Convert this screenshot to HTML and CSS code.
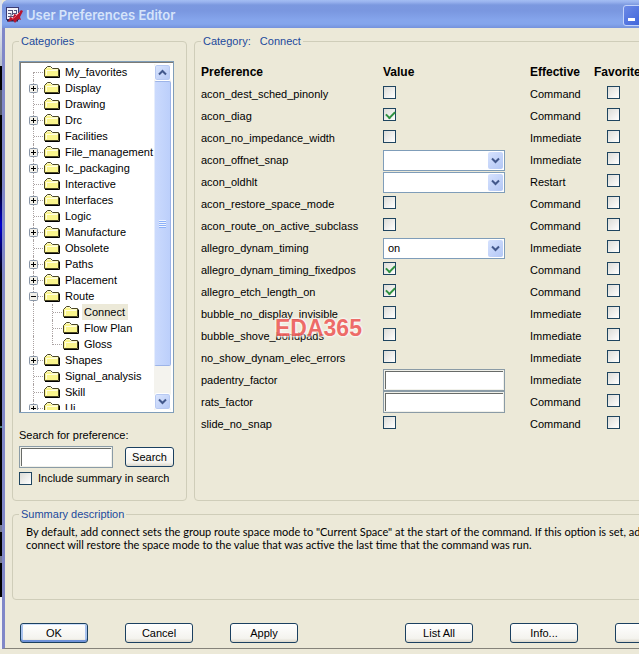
FILE: index.html
```html
<!DOCTYPE html>
<html lang="en">
<head>
<meta charset="utf-8">
<title>User Preferences Editor</title>
<link rel="stylesheet" href="styles.css">
</head>
<body>
<svg class="defs" aria-hidden="true">
  <symbol id="folder" viewBox="0 0 16 12">
    <path d="M1 11V3.500L3 1.500H6.500L8 3.500H14.500V11Z" fill="#faf58c"/>
    <path d="M2 4.500H13.500M2.500 5V9" stroke="#fffde0"/>
    <path d="M.5 10.500V3.500L3.500 .5H6.500L8.500 2.500H14.500V10.500Z" fill="none" stroke="#4a4623"/>
    <path d="M1 11.500H15.500V3.500" fill="none" stroke="#000"/>
  </symbol>
  <symbol id="plus" viewBox="0 0 9 9">
    <rect x=".5" y=".5" width="8" height="8" rx="1" fill="#f2f0e9" stroke="#8794a6"/>
    <path d="M2 4.500H7M4.500 2V7" stroke="#000"/>
  </symbol>
  <symbol id="minus" viewBox="0 0 9 9">
    <rect x=".5" y=".5" width="8" height="8" rx="1" fill="#f2f0e9" stroke="#8794a6"/>
    <path d="M2 4.500H7" stroke="#000"/>
  </symbol>
  <symbol id="down" viewBox="0 0 9 7">
    <path d="M1 1.500L4.500 5L8 1.500" fill="none" stroke="#43598c" stroke-width="2"/>
  </symbol>
  <symbol id="up" viewBox="0 0 9 7">
    <path d="M1 5.500L4.500 2L8 5.500" fill="none" stroke="#43598c" stroke-width="2"/>
  </symbol>
</svg>
<div class="desktop">
  <div class="backdrop"></div>
  <main class="window">
    <header class="titlebar">
      <svg class="app-icon" viewBox="0 0 17 17" aria-hidden="true">
        <rect x=".5" y=".5" width="12" height="12" fill="#f2f3fb" stroke="#3b3b73"/>
        <path d="M2 3.500H6M8 3.500H11M2 6.500H5V9M7 6.500H11M2 9.500H8M6.500 3V8M10.500 3V6" stroke="#55557c" fill="none"/>
        <path d="M1 13.500H12" stroke="#22224a" stroke-width="2"/>
        <path d="M2 15L4 10L7 11L8 7L11 8L15 3L17 4L14 10L15 13L12 12L9 16L7 13Z" fill="#b7152d"/>
        <path d="M6 12L9 10L14 5" stroke="#ef5766" fill="none"/>
      </svg>
      <h1>User Preferences Editor</h1>
      <button class="minimize" aria-label="Minimize"></button>
    </header>

    <div class="panes">
      <fieldset class="categories">
        <legend>Categories</legend>
        <div class="tree">
          <ul class="nodes">
            <li><svg class="folder"><use href="#folder"/></svg><span>My_favorites</span></li>
            <li><svg class="toggle"><use href="#plus"/></svg><svg class="folder"><use href="#folder"/></svg><span>Display</span></li>
            <li><svg class="folder"><use href="#folder"/></svg><span>Drawing</span></li>
            <li><svg class="toggle"><use href="#plus"/></svg><svg class="folder"><use href="#folder"/></svg><span>Drc</span></li>
            <li><svg class="folder"><use href="#folder"/></svg><span>Facilities</span></li>
            <li><svg class="toggle"><use href="#plus"/></svg><svg class="folder"><use href="#folder"/></svg><span>File_management</span></li>
            <li><svg class="toggle"><use href="#plus"/></svg><svg class="folder"><use href="#folder"/></svg><span>Ic_packaging</span></li>
            <li><svg class="folder"><use href="#folder"/></svg><span>Interactive</span></li>
            <li><svg class="toggle"><use href="#plus"/></svg><svg class="folder"><use href="#folder"/></svg><span>Interfaces</span></li>
            <li><svg class="folder"><use href="#folder"/></svg><span>Logic</span></li>
            <li><svg class="toggle"><use href="#plus"/></svg><svg class="folder"><use href="#folder"/></svg><span>Manufacture</span></li>
            <li><svg class="folder"><use href="#folder"/></svg><span>Obsolete</span></li>
            <li><svg class="toggle"><use href="#plus"/></svg><svg class="folder"><use href="#folder"/></svg><span>Paths</span></li>
            <li><svg class="toggle"><use href="#plus"/></svg><svg class="folder"><use href="#folder"/></svg><span>Placement</span></li>
            <li><svg class="toggle"><use href="#minus"/></svg><svg class="folder"><use href="#folder"/></svg><span>Route</span></li>
            <li class="child"><svg class="folder"><use href="#folder"/></svg><span class="selected">Connect</span></li>
            <li class="child"><svg class="folder"><use href="#folder"/></svg><span>Flow Plan</span></li>
            <li class="child last"><svg class="folder"><use href="#folder"/></svg><span>Gloss</span></li>
            <li><svg class="toggle"><use href="#plus"/></svg><svg class="folder"><use href="#folder"/></svg><span>Shapes</span></li>
            <li><svg class="folder"><use href="#folder"/></svg><span>Signal_analysis</span></li>
            <li><svg class="folder"><use href="#folder"/></svg><span>Skill</span></li>
            <li><svg class="toggle"><use href="#plus"/></svg><svg class="folder"><use href="#folder"/></svg><span>Ui</span></li>
          </ul>
          <div class="scrollbar">
            <button class="scroll-button" aria-label="Scroll up"><svg class="arrow"><use href="#up"/></svg></button>
            <div class="thumb"><i class="grip"></i></div>
            <button class="scroll-button" aria-label="Scroll down"><svg class="arrow"><use href="#down"/></svg></button>
          </div>
        </div>
        <label class="search-label" for="search">Search for preference:</label>
        <div class="search-row">
          <input class="text-box" id="search" type="text">
          <button class="button">Search</button>
        </div>
        <label class="include"><input type="checkbox">Include summary in search</label>
      </fieldset>

      <fieldset class="preferences">
        <legend>Category: &nbsp; Connect</legend>
        <table>
          <thead>
            <tr><th class="name">Preference</th><th class="value">Value</th><th class="effective">Effective</th><th>Favorites</th></tr>
          </thead>
          <tbody>
            <tr><td><label for="p1">acon_dest_sched_pinonly</label></td><td><input id="p1" type="checkbox"></td><td>Command</td><td class="fav"><input type="checkbox" aria-label="Favorite"></td></tr>
            <tr><td><label for="p2">acon_diag</label></td><td><input id="p2" type="checkbox" checked></td><td>Command</td><td class="fav"><input type="checkbox" aria-label="Favorite"></td></tr>
            <tr><td><label for="p3">acon_no_impedance_width</label></td><td><input id="p3" type="checkbox"></td><td>Immediate</td><td class="fav"><input type="checkbox" aria-label="Favorite"></td></tr>
            <tr><td><label for="p4">acon_offnet_snap</label></td><td><div class="combo"><select id="p4"><option></option></select><span class="drop"><svg class="arrow"><use href="#down"/></svg></span></div></td><td>Immediate</td><td class="fav"><input type="checkbox" aria-label="Favorite"></td></tr>
            <tr><td><label for="p5">acon_oldhlt</label></td><td><div class="combo"><select id="p5"><option></option></select><span class="drop"><svg class="arrow"><use href="#down"/></svg></span></div></td><td>Restart</td><td class="fav"><input type="checkbox" aria-label="Favorite"></td></tr>
            <tr><td><label for="p6">acon_restore_space_mode</label></td><td><input id="p6" type="checkbox"></td><td>Command</td><td class="fav"><input type="checkbox" aria-label="Favorite"></td></tr>
            <tr><td><label for="p7">acon_route_on_active_subclass</label></td><td><input id="p7" type="checkbox"></td><td>Command</td><td class="fav"><input type="checkbox" aria-label="Favorite"></td></tr>
            <tr><td><label for="p8">allegro_dynam_timing</label></td><td><div class="combo"><select id="p8"><option>on</option></select><span class="drop"><svg class="arrow"><use href="#down"/></svg></span></div></td><td>Immediate</td><td class="fav"><input type="checkbox" aria-label="Favorite"></td></tr>
            <tr><td><label for="p9">allegro_dynam_timing_fixedpos</label></td><td><input id="p9" type="checkbox" checked></td><td>Command</td><td class="fav"><input type="checkbox" aria-label="Favorite"></td></tr>
            <tr><td><label for="p10">allegro_etch_length_on</label></td><td><input id="p10" type="checkbox" checked></td><td>Command</td><td class="fav"><input type="checkbox" aria-label="Favorite"></td></tr>
            <tr><td><label for="p11">bubble_no_display_invisible</label></td><td><input id="p11" type="checkbox"></td><td>Immediate</td><td class="fav"><input type="checkbox" aria-label="Favorite"></td></tr>
            <tr><td><label for="p12">bubble_shove_bondpads</label></td><td><input id="p12" type="checkbox"></td><td>Immediate</td><td class="fav"><input type="checkbox" aria-label="Favorite"></td></tr>
            <tr><td><label for="p13">no_show_dynam_elec_errors</label></td><td><input id="p13" type="checkbox"></td><td>Immediate</td><td class="fav"><input type="checkbox" aria-label="Favorite"></td></tr>
            <tr><td><label for="p14">padentry_factor</label></td><td><input class="text-box" id="p14" type="text"></td><td>Immediate</td><td class="fav"><input type="checkbox" aria-label="Favorite"></td></tr>
            <tr><td><label for="p15">rats_factor</label></td><td><input class="text-box" id="p15" type="text"></td><td>Command</td><td class="fav"><input type="checkbox" aria-label="Favorite"></td></tr>
            <tr><td><label for="p16">slide_no_snap</label></td><td><input id="p16" type="checkbox"></td><td>Command</td><td class="fav"><input type="checkbox" aria-label="Favorite"></td></tr>
          </tbody>
        </table>
        <div class="watermark">EDA365</div>
      </fieldset>
    </div>

    <fieldset class="summary">
      <legend>Summary description</legend>
      <p>By default, add connect sets the group route space mode to "Current Space" at the start of the command. If this option is set, add<br>connect will restore the space mode to the value that was active the last time that the command was run.</p>
    </fieldset>

    <footer class="actions">
      <button class="button default">OK</button>
      <button class="button">Cancel</button>
      <button class="button">Apply</button>
      <button class="button second-group">List All</button>
      <button class="button">Info...</button>
      <button class="button" aria-label="Help"></button>
    </footer>
  </main>
</div>
</body>
</html>
```

FILE: styles.css
```css
* { box-sizing: border-box; }

html, body { height: 100%; }

body {
  margin: 0;
  overflow: hidden;
  background: #ece9d8;
  color: #000;
  font: 11px/16px "Liberation Sans", Arial, sans-serif;
}

button, input, select { margin: 0; font: inherit; color: inherit; }

svg { display: block; flex: none; }

.defs { position: absolute; width: 0; height: 0; }

.desktop { display: flex; align-items: flex-start; }

.backdrop {
  flex: none;
  align-self: stretch;
  width: 2px;
  background: linear-gradient(#dfe3ee 0 30px, #b4bccb 66px, #000 66px 90px, #555a6b 90px 115px, #000 115px 185px, #0000d0 225px, #000 275px 426px, #497a78 426px 428px, #000 428px 525px, #777b92 525px 532px, #000 532px 556px, #777b92 556px 563px, #000 563px 597px, #f2f2f2 597px);
}

.window {
  flex: 1;
  min-width: 698px;
  border-left: 3px solid #8087c8;
  border-top-left-radius: 7px;
  border-bottom: 1px solid #85837a;
  background: #ece9d8;
}

/* Title bar */
.titlebar {
  display: flex;
  align-items: center;
  gap: 3px;
  height: 28px;
  padding: 2px 56px 0 2px;
  margin-left: -3px;
  border-top-left-radius: 6px;
  background: linear-gradient(#a3bdf3 0, #98b2ee 2px, #7b98df 5px, #7a97e0 11px, #85a5ec 20px, #84a5ec 24px, #7592dc 28px);
}

.app-icon { width: 17px; height: 17px; margin-left: 2px; }

.titlebar h1 {
  flex: 1;
  margin: 0;
  color: #d6e4fa;
  font: 600 13px/18px Inter, sans-serif;
}

.minimize {
  display: flex;
  align-items: flex-end;
  width: 21px;
  height: 21px;
  padding: 4px;
  border: 1px solid #c3d3fa;
  border-radius: 3px;
  background: linear-gradient(135deg, #6c8ae6, #3c62da);
}

.minimize::before { content: ""; width: 7px; height: 3px; background: #fff; }

/* Group boxes */
fieldset {
  position: relative;
  min-width: 0;
  margin: 0;
  padding: 0;
  border: 1px solid #cfcdb9;
  border-radius: 4px;
}

legend {
  padding: 0 2px;
  color: #1c4a9c;
  line-height: 16px;
}

.panes { display: flex; gap: 7px; padding: 5px 0 0 7px; height: 473px; }

.categories { flex: none; width: 175px; padding: 12px 12px 0 6px; }

.preferences { flex: 1; padding: 12px 0 0 6px; }

/* Category tree */
.tree {
  display: flex;
  height: 352px;
  border: 1px solid #7f9db9;
  padding: 2px;
  background: #fff;
  box-shadow: inset 1px 1px #7b7b76;
}

.nodes {
  flex: 1;
  margin: 0;
  padding: 0;
  overflow: hidden;
  list-style: none;
}

.nodes li {
  position: relative;
  display: flex;
  align-items: center;
  height: 16px;
  padding-left: 22px;
  white-space: nowrap;
}

.nodes li::before {
  content: "";
  position: absolute;
  left: 11px;
  top: 0;
  width: 10px;
  height: 16px;
  border-left: 1px dotted #aaa2a2;
  background: repeating-linear-gradient(90deg, #aaa2a2 0 1px, transparent 1px 2px) 0 8px / 10px 1px no-repeat;
}

.nodes li:first-child::before { top: 8px; height: 8px; background-position: 0 0; }

.nodes .child { padding-left: 41px; }

.nodes .child::before { background: none; }

.nodes .child::after {
  content: "";
  position: absolute;
  left: 30px;
  top: 0;
  width: 10px;
  height: 16px;
  border-left: 1px dotted #aaa2a2;
  background: repeating-linear-gradient(90deg, #aaa2a2 0 1px, transparent 1px 2px) 0 8px / 10px 1px no-repeat;
}

.nodes .last::after { height: 9px; }

.nodes .folder { width: 16px; height: 12px; }

.nodes .toggle { position: absolute; left: 7px; top: 4px; width: 9px; height: 9px; }

.nodes span { margin-left: 3px; padding: 0 3px 0 2px; }

.nodes .selected { background: #ece9d8; }

.scrollbar {
  display: flex;
  flex-direction: column;
  flex: none;
  width: 17px;
  background: #f4f3ee;
}

.scroll-button {
  display: grid;
  place-items: center;
  height: 17px;
  padding: 0;
  border: 1px solid #fff;
  border-radius: 3px;
  background: linear-gradient(135deg, #dbe6fe, #b5c8f5);
  box-shadow: inset 0 0 0 1px #b7c9f2;
}

.arrow { width: 9px; height: 7px; }

.thumb {
  display: grid;
  place-items: center;
  height: 285px;
  margin-bottom: auto;
  border: 1px solid #9db4e8;
  border-left-color: #e6edfc;
  border-radius: 2px;
  background: linear-gradient(90deg, #cbdafd, #bccffb);
}

.grip {
  width: 7px;
  height: 8px;
  background: repeating-linear-gradient(#eef4fe 0 1px, #8cb0f8 1px 2px);
}

/* Search */
.search-label { display: block; margin: 14px 0 3px; }

.search-row { display: flex; align-items: center; gap: 12px; }

.text-box {
  display: block;
  width: 122px;
  height: 22px;
  padding: 0 4px;
  border: 1px solid #8a9ba6;
  background: #fff;
  box-shadow: inset 0 0 0 1px #f1f1ea, inset 2px 2px #686b68;
}

.search-row .text-box { flex: 1; min-width: 0; width: auto; }

.search-row .button { width: 49px; }

.include { display: flex; align-items: center; gap: 6px; margin-top: 2px; }

input[type="checkbox"] {
  appearance: none;
  flex: none;
  display: block;
  width: 13px;
  height: 13px;
  border: 1px solid #1f4560;
  background: linear-gradient(135deg, #dcdcd7, #fff);
}

input[type="checkbox"]:checked::before {
  content: "";
  display: block;
  width: 7px;
  height: 4px;
  margin: 2px;
  border: solid #2f9140;
  border-width: 0 0 2px 2px;
  transform: rotate(-45deg);
}

/* Preference table */
table { width: 490px; table-layout: fixed; border-collapse: collapse; }

th, td { height: 22px; padding: 0; text-align: left; white-space: nowrap; }

th { font-size: 12px; }

.name { width: 182px; }

.value { width: 147px; }

.effective { width: 64px; }

.fav { padding-left: 13px; }

td input[type="checkbox"] { margin-bottom: 3px; }

.combo { position: relative; width: 122px; height: 21px; }

.combo select {
  appearance: none;
  width: 100%;
  height: 100%;
  padding: 0 20px 0 4px;
  border: 1px solid #7f9db9;
  border-radius: 0;
  background: #fff;
}

.drop {
  position: absolute;
  right: 2px;
  top: 2px;
  display: grid;
  place-items: center;
  width: 15px;
  height: 17px;
  border-radius: 2px;
  background: linear-gradient(135deg, #d6e2fe, #b3c7f5);
  pointer-events: none;
}

.watermark {
  position: absolute;
  left: 80px;
  top: 267px;
  color: #ee5f5c;
  font: bold 23px/24px "Liberation Sans", Arial, sans-serif;
  text-shadow: 0 0 2px #fff, 0 0 3px #fff, 0 0 3px #fff;
  opacity: 0.9;
  pointer-events: none;
}

/* Summary */
.summary { height: 94px; margin: 5px 0 0 7px; }

.summary legend { margin-left: 6px; }

.summary p {
  margin: 3px 0 0 13px;
  font-family: Lato, "Liberation Sans", sans-serif;
  line-height: 13px;
  white-space: nowrap;
}

/* Buttons */
.actions { display: flex; gap: 37px; padding: 23px 0 5px 15px; }

.button {
  flex: none;
  width: 68px;
  height: 20px;
  padding: 0;
  border: 1px solid #1b4060;
  border-radius: 3px;
  background: linear-gradient(#fff, #f4f3ee 80%, #dcd8cc);
  line-height: 16px;
}

.default { box-shadow: inset 0 1px #cee0fb, inset 0 -2px #6f92d8, inset 2px 0 #a9c3ee, inset -2px 0 #a9c3ee; }

.second-group { margin-left: 70px; }
```
